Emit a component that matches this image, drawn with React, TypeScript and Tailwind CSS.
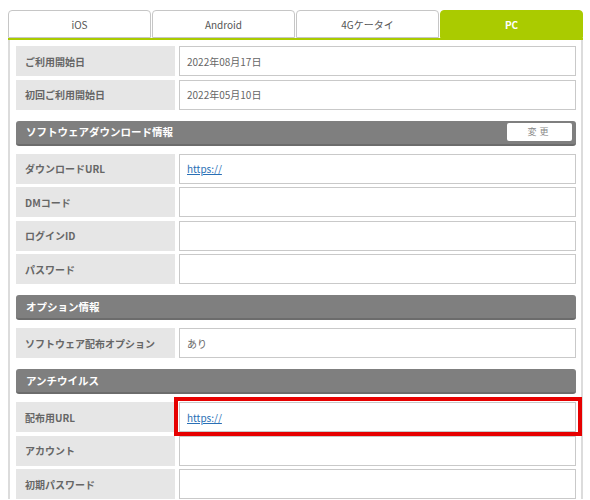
import React from "react";

type Row = { label: string; value?: string; link?: boolean; highlight?: boolean };

const font = { fontFamily: '"Noto Sans CJK JP", "Noto Sans", sans-serif' };

function DataRow({ row }: { row: Row }) {
  return (
    <div className="flex gap-[4px] h-[30px]">
      <div className="w-[159px] shrink-0 bg-[#e6e6e6] flex items-center pl-[9px] text-[10px] font-bold text-[#666]">
        {row.label}
      </div>
      <div className="relative flex-1 bg-white border border-[#c9c9c9] flex items-center pl-[7px] text-[10px] text-[#666]">
        {row.link ? (
          <span className="text-[#2a6fb5] underline">{row.value}</span>
        ) : (
          row.value
        )}
        {row.highlight && (
          <div className="absolute -left-[6px] -top-[6px] -right-[7px] -bottom-[5px] border-[4px] border-[#e60000]" />
        )}
      </div>
    </div>
  );
}

function Header({ title, button }: { title: string; button?: string }) {
  return (
    <div className="h-[25px] bg-[#7f7f7f] rounded-[3px] border-b-2 border-[#6c6c6c] flex items-center justify-between pl-[10px] pr-[4px]">
      <span className="text-white text-[10.5px] font-bold">{title}</span>
      {button && (
        <span className="w-[65px] h-[18px] bg-white rounded-[2px] flex items-center justify-center text-[9px] text-[#888] tracking-[3px]">
          {button}
        </span>
      )}
    </div>
  );
}

function Section({ title, button, rows }: { title?: string; button?: string; rows: Row[] }) {
  return (
    <div className="flex flex-col">
      {title && (
        <div className="mb-[8px]">
          <Header title={title} button={button} />
        </div>
      )}
      <div className="flex flex-col gap-[3.5px]">
        {rows.map((r) => (
          <DataRow key={r.label} row={r} />
        ))}
      </div>
    </div>
  );
}

export default function App() {
  const tabs = ["iOS", "Android", "4Gケータイ", "PC"];
  return (
    <div className="w-[590px] h-[500px] overflow-hidden bg-white" style={font}>
      <div className="pt-[10px] pl-[8px] w-[583px]">
        <div className="flex gap-[1px] h-[28px]">
          {tabs.map((t, i) => {
            const active = i === 3;
            return (
              <div
                key={t}
                className={
                  active
                    ? "flex-1 rounded-t-[4px] bg-[#aacb00] border border-[#aacb00] flex items-center justify-center text-[10px] font-bold text-white"
                    : "flex-1 rounded-t-[4px] bg-white border border-[#c6c6c6] flex items-center justify-center text-[10px] text-[#555]"
                }
              >
                {t}
              </div>
            );
          })}
        </div>
        <div className="h-[2px] bg-[#aacb00]" />
        <div className="border-x-2 border-[#dcdcdc] pl-[6px] pr-[5px] pt-[6px] flex flex-col gap-[11px]">
          <Section
            rows={[
              { label: "ご利用開始日", value: "2022年08月17日" },
              { label: "初回ご利用開始日", value: "2022年05月10日" },
            ]}
          />
          <Section
            title="ソフトウェアダウンロード情報"
            button="変更"
            rows={[
              { label: "ダウンロードURL", value: "https://", link: true },
              { label: "DMコード" },
              { label: "ログインID" },
              { label: "パスワード" },
            ]}
          />
          <Section
            title="オプション情報"
            rows={[{ label: "ソフトウェア配布オプション", value: "あり" }]}
          />
          <Section
            title="アンチウイルス"
            rows={[
              { label: "配布用URL", value: "https://", link: true, highlight: true },
              { label: "アカウント" },
              { label: "初期パスワード" },
            ]}
          />
        </div>
      </div>
    </div>
  );
}
